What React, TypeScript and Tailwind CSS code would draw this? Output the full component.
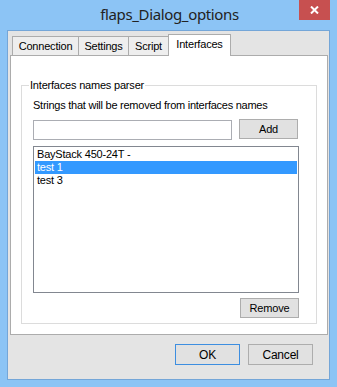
import React from "react";

const ui = { fontFamily: '"Liberation Sans", Arial, sans-serif' };

function Btn({ label, focused, className = "" }: { label: string; focused?: boolean; className?: string }) {
  return (
    <div
      className={`flex items-center justify-center border bg-[#e1e1e1] text-[11px] text-black tracking-[-0.2px] ${
        focused ? "border-[#3d8ee0]" : "border-[#adadad]"
      } ${className}`}
    >
      {label}
    </div>
  );
}

export default function App() {
  const tabs = ["Connection", "Settings", "Script"];
  return (
    <div className="w-[337px] h-[387px] bg-[#8cc4f5] flex flex-col" style={ui}>
      {/* title bar */}
      <div className="relative h-[30px] shrink-0 flex items-center justify-center">
        <span
          className="text-[15px] text-[#222] leading-none pb-[2px] pl-[2px] tracking-[-0.35px]"
          style={{ fontFamily: '"Noto Sans", "Open Sans", sans-serif' }}
        >
          flaps_Dialog_options
        </span>
        <div className="absolute right-[7px] top-0 w-[31px] h-[20px] bg-[#c75050] flex items-center justify-center">
          <svg width="9" height="8" viewBox="0 0 9 8">
            <path d="M1 0.5 L8 7.5 M8 0.5 L1 7.5" stroke="white" strokeWidth="2" />
          </svg>
        </div>
      </div>

      {/* client */}
      <div className="ml-[7px] w-[323px] h-[350px] border border-[#74a6d8] bg-[#e4e4e4] flex flex-col">
        {/* tab strip */}
        <div className="h-[22px] mt-[2px] pl-[4px] flex items-end">
          {tabs.map((t) => (
            <div
              key={t}
              className="h-[19px] -mr-px border border-b-0 border-[#acacac] bg-[#eeeeee] text-[11px] text-black tracking-[-0.2px] flex items-center justify-center"
              style={{ width: t === "Connection" ? 67 : t === "Settings" ? 51 : 41 }}
            >
              {t}
            </div>
          ))}
          <div className="relative z-10 h-[22px] w-[63px] -mb-px border border-b-0 border-[#acacac] bg-white text-[11px] text-black tracking-[-0.2px] flex items-center justify-center pb-[3px]">
            Interfaces
          </div>
        </div>

        {/* tab panel */}
        <div className="ml-[2px] w-[318px] h-[280px] border border-[#acacac] bg-white px-[10px] pt-[23px] pb-[10px] flex flex-col">
          <fieldset className="border border-[#dcdcdc] m-0 p-0 flex-1 min-h-0">
            <legend className="ml-[7px] px-[1px] text-[11px] leading-[13px] text-black tracking-[-0.2px]">
              Interfaces names parser
            </legend>
            <div className="pl-[11px] pr-[17px] flex flex-col">
              <div className="text-[11px] leading-[13px] text-black mt-[7px] tracking-[-0.25px]">
                Strings that will be removed from interfaces names
              </div>
              <div className="flex items-start mt-[7px]">
                <div className="w-[199px] h-[20px] border border-[#abadb3] bg-white mt-[1px]" />
                <Btn label="Add" className="ml-[7px] w-[59px] h-[20px]" />
              </div>
              <div className="mt-[6px] h-[147px] border border-[#828790] bg-white p-[1px] flex flex-col text-[11px] leading-[13px] tracking-[-0.2px]">
                <div className="pl-[2px] text-black">BayStack 450-24T -</div>
                <div className="pl-[2px] bg-[#3399ff] text-white">test 1</div>
                <div className="pl-[2px] text-black">test 3</div>
              </div>
              <div className="flex justify-end mt-[5px]">
                <Btn label="Remove" className="w-[59px] h-[20px]" />
              </div>
            </div>
          </fieldset>
        </div>

        {/* footer */}
        <div className="flex justify-end gap-[8px] pr-[16px] mt-[9px]">
          <Btn label="OK" focused className="w-[65px] h-[21px] text-[12px]" />
          <Btn label="Cancel" className="w-[65px] h-[21px] text-[12px]" />
        </div>
      </div>
    </div>
  );
}
